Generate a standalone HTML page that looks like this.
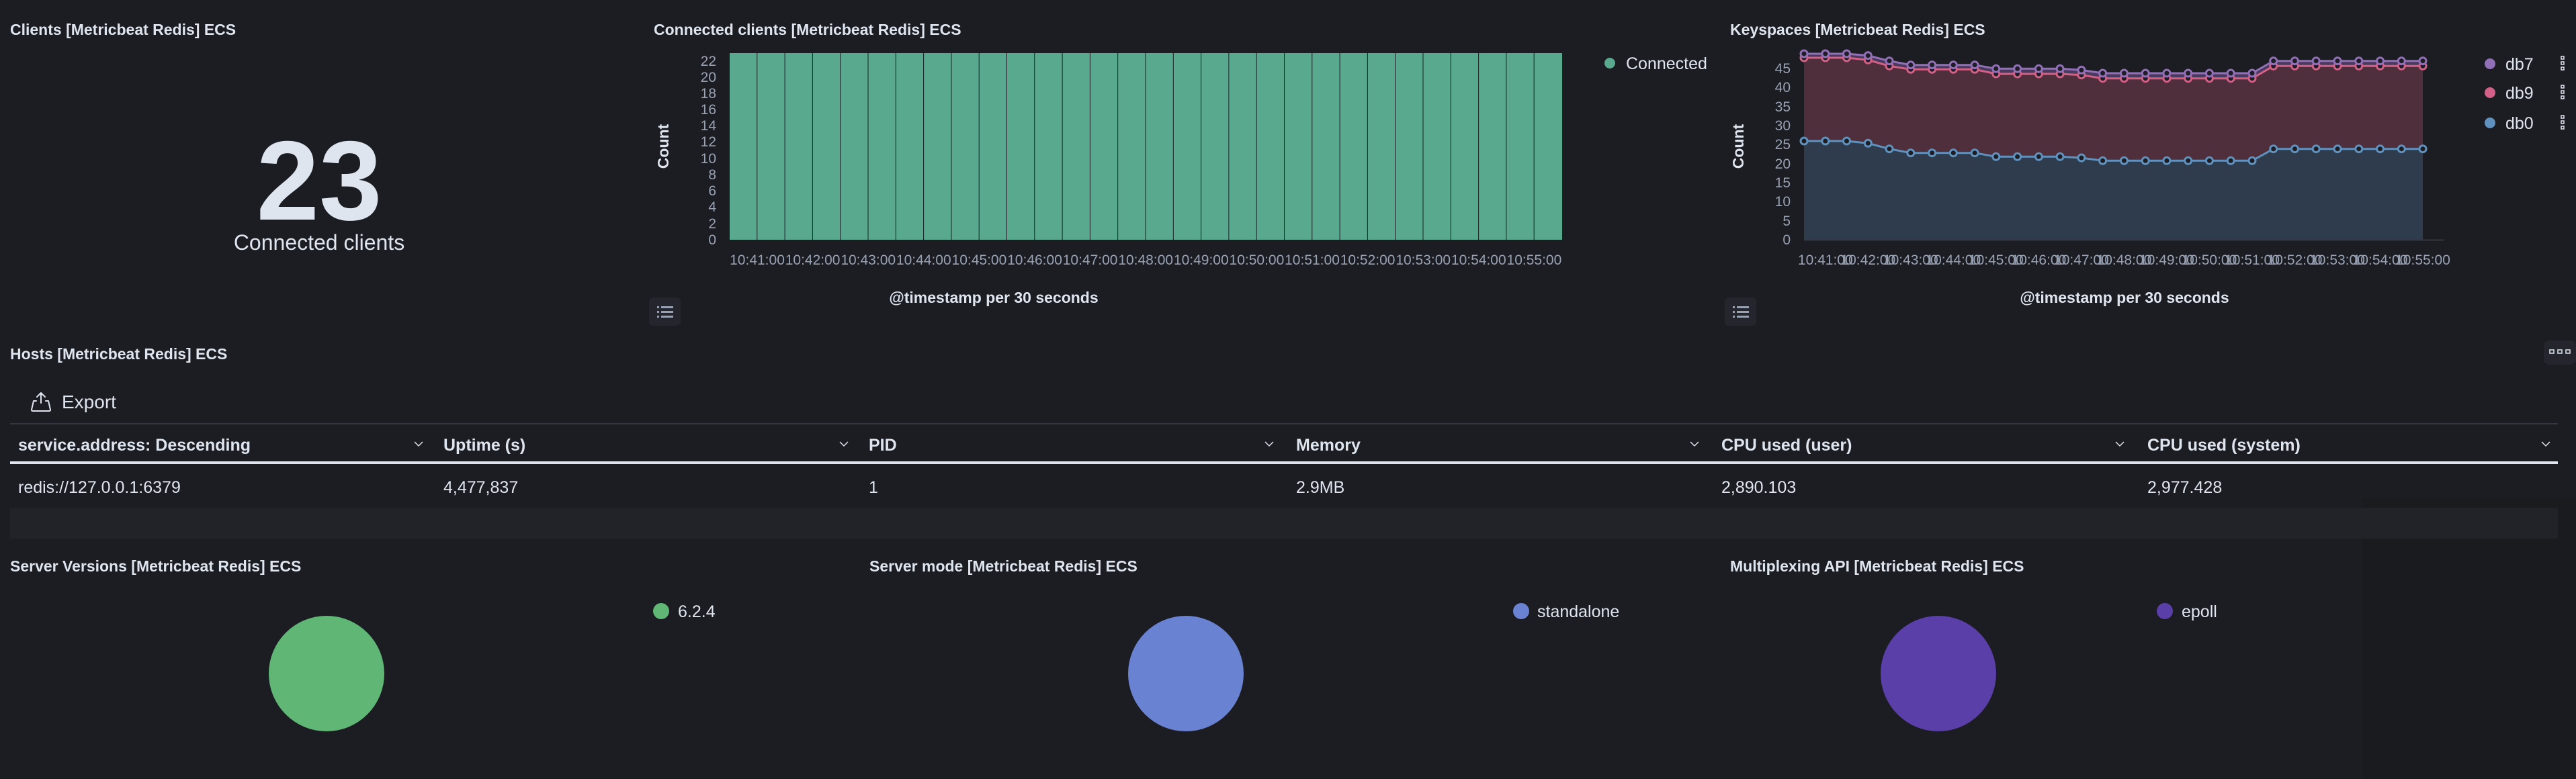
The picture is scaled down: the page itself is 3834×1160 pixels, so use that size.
<!DOCTYPE html>
<html><head><meta charset="utf-8"><style>
html,body{margin:0;padding:0;background:#1c1d22;width:3834px;height:1160px;overflow:hidden}
svg{display:block}
text{font-family:"Liberation Sans",sans-serif}
.t{font-size:23px;font-weight:bold;fill:#dfe5ef}
.ax{font-size:21px;fill:#98a2b3}
.lg{font-size:25px;fill:#dfe5ef}
.th{font-size:25px;font-weight:bold;fill:#dfe5ef}
.td{font-size:25px;fill:#dfe5ef}
</style></head><body>
<svg width="3834" height="1160" viewBox="0 0 3834 1160" xmlns="http://www.w3.org/2000/svg">
<defs>
<marker id="m7" markerUnits="userSpaceOnUse" markerWidth="16" markerHeight="16" refX="8" refY="8"><circle cx="8" cy="8" r="5" fill="#1d1e24" stroke="#9170b8" stroke-width="3"/></marker>
<marker id="m9" markerUnits="userSpaceOnUse" markerWidth="16" markerHeight="16" refX="8" refY="8"><circle cx="8" cy="8" r="5" fill="#1d1e24" stroke="#d36086" stroke-width="3"/></marker>
<marker id="m0" markerUnits="userSpaceOnUse" markerWidth="16" markerHeight="16" refX="8" refY="8"><circle cx="8" cy="8" r="5" fill="#1d1e24" stroke="#6092c0" stroke-width="3"/></marker>
</defs>
<rect x="0" y="0" width="3834" height="1160" fill="#1c1d22"/>
<rect x="3516" y="742" width="318" height="418" fill="#1a1b1f"/>

<!-- Panel 1 -->
<text class="t" x="15" y="52">Clients [Metricbeat Redis] ECS</text>
<text x="475" y="327" text-anchor="middle" style="font-size:168px;font-weight:bold;fill:#dfe5ef">23</text>
<text x="475" y="372" text-anchor="middle" style="font-size:32px;fill:#dfe5ef">Connected clients</text>

<!-- Panel 2 -->
<text class="t" x="973" y="52">Connected clients [Metricbeat Redis] ECS</text>
<g fill="#59a98e">
<rect x="1086" y="79" width="40.3" height="278"/><rect x="1127.3" y="79" width="40.3" height="278"/><rect x="1168.6" y="79" width="40.3" height="278"/><rect x="1209.9" y="79" width="40.3" height="278"/><rect x="1251.2" y="79" width="40.3" height="278"/><rect x="1292.5" y="79" width="40.3" height="278"/><rect x="1333.8" y="79" width="40.3" height="278"/><rect x="1375.1" y="79" width="40.3" height="278"/><rect x="1416.4" y="79" width="40.3" height="278"/><rect x="1457.7" y="79" width="40.3" height="278"/>
<rect x="1499" y="79" width="40.3" height="278"/><rect x="1540.3" y="79" width="40.3" height="278"/><rect x="1581.6" y="79" width="40.3" height="278"/><rect x="1622.9" y="79" width="40.3" height="278"/><rect x="1664.2" y="79" width="40.3" height="278"/><rect x="1705.5" y="79" width="40.3" height="278"/><rect x="1746.8" y="79" width="40.3" height="278"/><rect x="1788.1" y="79" width="40.3" height="278"/><rect x="1829.4" y="79" width="40.3" height="278"/><rect x="1870.7" y="79" width="40.3" height="278"/>
<rect x="1912" y="79" width="40.3" height="278"/><rect x="1953.3" y="79" width="40.3" height="278"/><rect x="1994.6" y="79" width="40.3" height="278"/><rect x="2035.9" y="79" width="40.3" height="278"/><rect x="2077.2" y="79" width="40.3" height="278"/><rect x="2118.5" y="79" width="40.3" height="278"/><rect x="2159.8" y="79" width="40.3" height="278"/><rect x="2201.1" y="79" width="40.3" height="278"/><rect x="2242.4" y="79" width="40.3" height="278"/><rect x="2283.7" y="79" width="41.3" height="278"/>
</g>
<g class="ax" text-anchor="end">
<text x="1066" y="364">0</text><text x="1066" y="340">2</text><text x="1066" y="315">4</text><text x="1066" y="291">6</text><text x="1066" y="267">8</text><text x="1066" y="243">10</text><text x="1066" y="218">12</text><text x="1066" y="194">14</text><text x="1066" y="170">16</text><text x="1066" y="146">18</text><text x="1066" y="122">20</text><text x="1066" y="98">22</text>
</g>
<g class="ax" text-anchor="middle">
<text x="1127" y="394">10:41:00</text><text x="1209.6" y="394">10:42:00</text><text x="1292.2" y="394">10:43:00</text><text x="1374.8" y="394">10:44:00</text><text x="1457.4" y="394">10:45:00</text><text x="1540" y="394">10:46:00</text><text x="1622.6" y="394">10:47:00</text><text x="1705.2" y="394">10:48:00</text><text x="1787.8" y="394">10:49:00</text><text x="1870.4" y="394">10:50:00</text><text x="1953" y="394">10:51:00</text><text x="2035.6" y="394">10:52:00</text><text x="2118.2" y="394">10:53:00</text><text x="2200.8" y="394">10:54:00</text><text x="2283.4" y="394">10:55:00</text>
</g>
<text class="t" transform="translate(995,218) rotate(-90)" text-anchor="middle">Count</text>
<text class="t" x="1479" y="451" text-anchor="middle">@timestamp per 30 seconds</text>
<circle cx="2396" cy="94" r="8" fill="#59a98e"/>
<text class="lg" x="2420" y="103">Connected</text>
<rect x="966" y="443" width="47" height="42" rx="6" fill="#25262d"/>
<g fill="#98a2b3"><rect x="978" y="456" width="3" height="3"/><rect x="984" y="456" width="18" height="3"/><rect x="978" y="463" width="3" height="3"/><rect x="984" y="463" width="18" height="3"/><rect x="978" y="470" width="3" height="3"/><rect x="984" y="470" width="18" height="3"/></g>

<!-- Panel 3 -->
<text class="t" x="2575" y="52">Keyspaces [Metricbeat Redis] ECS</text>
<polygon fill="#4a3a5e" points="2685,80 2716.8,80 2748.5,80 2780.3,82.7 2812,90.7 2843.8,96.7 2875.6,96.7 2907.3,96.7 2939.1,96.7 2970.8,102.3 3002.6,102.3 3034.4,102.3 3066.1,102.3 3097.9,104.3 3129.6,109 3161.4,109 3193.2,109 3224.9,109 3256.7,109 3288.4,109 3320.2,109 3352,109 3383.7,90.7 3415.5,90.7 3447.2,90.7 3479,90.7 3510.8,90.7 3542.5,90.7 3574.3,90.7 3606,90.7 3606,357 2685,357"/>
<polygon fill="#4e2f3b" points="2685,86 2716.8,86 2748.5,86 2780.3,89.3 2812,98.3 2843.8,103.3 2875.6,103.3 2907.3,103.3 2939.1,103.3 2970.8,110 3002.6,110 3034.4,110 3066.1,110 3097.9,111.7 3129.6,116.7 3161.4,116.7 3193.2,116.7 3224.9,116.7 3256.7,116.7 3288.4,116.7 3320.2,116.7 3352,116.7 3383.7,98.3 3415.5,98.3 3447.2,98.3 3479,98.3 3510.8,98.3 3542.5,98.3 3574.3,98.3 3606,98.3 3606,357 2685,357"/>
<polygon fill="#2f3c4e" points="2685,210 2716.8,210 2748.5,210 2780.3,213.3 2812,221.7 2843.8,227.7 2875.6,227.7 2907.3,227.7 2939.1,227.7 2970.8,233.3 3002.6,233.3 3034.4,233.3 3066.1,233.3 3097.9,235 3129.6,239.3 3161.4,239.3 3193.2,239.3 3224.9,239.3 3256.7,239.3 3288.4,239.3 3320.2,239.3 3352,239.3 3383.7,221.7 3415.5,221.7 3447.2,221.7 3479,221.7 3510.8,221.7 3542.5,221.7 3574.3,221.7 3606,221.7 3606,357 2685,357"/>
<line x1="2685" y1="357.5" x2="3638" y2="357.5" stroke="#343741" stroke-width="2"/>
<polyline fill="none" stroke="#d36086" stroke-width="3" marker-start="url(#m9)" marker-mid="url(#m9)" marker-end="url(#m9)" points="2685,86 2716.8,86 2748.5,86 2780.3,89.3 2812,98.3 2843.8,103.3 2875.6,103.3 2907.3,103.3 2939.1,103.3 2970.8,110 3002.6,110 3034.4,110 3066.1,110 3097.9,111.7 3129.6,116.7 3161.4,116.7 3193.2,116.7 3224.9,116.7 3256.7,116.7 3288.4,116.7 3320.2,116.7 3352,116.7 3383.7,98.3 3415.5,98.3 3447.2,98.3 3479,98.3 3510.8,98.3 3542.5,98.3 3574.3,98.3 3606,98.3"/>
<polyline fill="none" stroke="#9170b8" stroke-width="3" marker-start="url(#m7)" marker-mid="url(#m7)" marker-end="url(#m7)" points="2685,80 2716.8,80 2748.5,80 2780.3,82.7 2812,90.7 2843.8,96.7 2875.6,96.7 2907.3,96.7 2939.1,96.7 2970.8,102.3 3002.6,102.3 3034.4,102.3 3066.1,102.3 3097.9,104.3 3129.6,109 3161.4,109 3193.2,109 3224.9,109 3256.7,109 3288.4,109 3320.2,109 3352,109 3383.7,90.7 3415.5,90.7 3447.2,90.7 3479,90.7 3510.8,90.7 3542.5,90.7 3574.3,90.7 3606,90.7"/>
<polyline fill="none" stroke="#6092c0" stroke-width="3" marker-start="url(#m0)" marker-mid="url(#m0)" marker-end="url(#m0)" points="2685,210 2716.8,210 2748.5,210 2780.3,213.3 2812,221.7 2843.8,227.7 2875.6,227.7 2907.3,227.7 2939.1,227.7 2970.8,233.3 3002.6,233.3 3034.4,233.3 3066.1,233.3 3097.9,235 3129.6,239.3 3161.4,239.3 3193.2,239.3 3224.9,239.3 3256.7,239.3 3288.4,239.3 3320.2,239.3 3352,239.3 3383.7,221.7 3415.5,221.7 3447.2,221.7 3479,221.7 3510.8,221.7 3542.5,221.7 3574.3,221.7 3606,221.7"/>
<g class="ax" text-anchor="end">
<text x="2665" y="364">0</text><text x="2665" y="336">5</text><text x="2665" y="307">10</text><text x="2665" y="279">15</text><text x="2665" y="251">20</text><text x="2665" y="222">25</text><text x="2665" y="194">30</text><text x="2665" y="166">35</text><text x="2665" y="137">40</text><text x="2665" y="109">45</text>
</g>
<g class="ax" text-anchor="middle">
<text x="2716.8" y="394">10:41:00</text><text x="2780.3" y="394">10:42:00</text><text x="2843.8" y="394">10:43:00</text><text x="2907.3" y="394">10:44:00</text><text x="2970.8" y="394">10:45:00</text><text x="3034.4" y="394">10:46:00</text><text x="3097.9" y="394">10:47:00</text><text x="3161.4" y="394">10:48:00</text><text x="3224.9" y="394">10:49:00</text><text x="3288.4" y="394">10:50:00</text><text x="3352" y="394">10:51:00</text><text x="3415.5" y="394">10:52:00</text><text x="3479" y="394">10:53:00</text><text x="3542.5" y="394">10:54:00</text><text x="3606" y="394">10:55:00</text>
</g>
<text class="t" transform="translate(2595,218) rotate(-90)" text-anchor="middle">Count</text>
<text class="t" x="3162" y="451" text-anchor="middle">@timestamp per 30 seconds</text>
<rect x="2567" y="443" width="47" height="42" rx="6" fill="#25262d"/>
<g fill="#98a2b3"><rect x="2579" y="456" width="3" height="3"/><rect x="2585" y="456" width="18" height="3"/><rect x="2579" y="463" width="3" height="3"/><rect x="2585" y="463" width="18" height="3"/><rect x="2579" y="470" width="3" height="3"/><rect x="2585" y="470" width="18" height="3"/></g>
<circle cx="3706" cy="95" r="8" fill="#9170b8"/><text class="lg" x="3729" y="104">db7</text>
<circle cx="3706" cy="138" r="8" fill="#d36086"/><text class="lg" x="3729" y="147">db9</text>
<circle cx="3706" cy="183" r="8" fill="#6092c0"/><text class="lg" x="3729" y="192">db0</text>
<g fill="none" stroke="#dfe5ef" stroke-width="1.5">
<rect x="3812" y="84" width="4" height="4"/><rect x="3812" y="92" width="4" height="4"/><rect x="3812" y="100" width="4" height="4"/>
<rect x="3812" y="127" width="4" height="4"/><rect x="3812" y="135" width="4" height="4"/><rect x="3812" y="143" width="4" height="4"/>
<rect x="3812" y="172" width="4" height="4"/><rect x="3812" y="180" width="4" height="4"/><rect x="3812" y="188" width="4" height="4"/>
</g>

<!-- Hosts table -->
<text class="t" x="15" y="535">Hosts [Metricbeat Redis] ECS</text>
<rect x="3786" y="507" width="48" height="36" rx="8" fill="#25262d"/>
<g fill="none" stroke="#dfe5ef" stroke-width="1.5"><rect x="3795" y="521" width="6" height="5"/><rect x="3807" y="521" width="6" height="5"/><rect x="3819" y="521" width="6" height="5"/></g>
<g fill="none" stroke="#dfe5ef" stroke-width="2" stroke-linecap="round" stroke-linejoin="round">
<path d="M61 600 V585 M55 591 L61 585 L67 591"/>
<path d="M54 597 H50 L47 610 Q47 612 49 612 H73 Q75 612 75 610 L72 597 H68"/>
</g>
<text x="92" y="608" style="font-size:28px;fill:#dfe5ef">Export</text>
<rect x="15" y="630" width="3792" height="2" fill="#343741"/>
<rect x="15" y="687" width="3792" height="4" fill="#dfe5ef"/>
<rect x="15" y="756" width="3792" height="46" fill="#222329"/>
<g class="th">
<text x="27" y="671">service.address: Descending</text>
<text x="660" y="671">Uptime (s)</text>
<text x="1293" y="671">PID</text>
<text x="1929" y="671">Memory</text>
<text x="2562" y="671">CPU used (user)</text>
<text x="3196" y="671">CPU used (system)</text>
</g>
<g fill="none" stroke="#dfe5ef" stroke-width="1.5">
<path d="M617 658 L623 664 L629 658"/><path d="M1250 658 L1256 664 L1262 658"/><path d="M1883 658 L1889 664 L1895 658"/><path d="M2516 658 L2522 664 L2528 658"/><path d="M3149 658 L3155 664 L3161 658"/><path d="M3783 658 L3789 664 L3795 658"/>
</g>
<g class="td">
<text x="27" y="734">redis://127.0.0.1:6379</text>
<text x="660" y="734">4,477,837</text>
<text x="1293" y="734">1</text>
<text x="1929" y="734">2.9MB</text>
<text x="2562" y="734">2,890.103</text>
<text x="3196" y="734">2,977.428</text>
</g>

<!-- Bottom pies -->
<text class="t" x="15" y="851">Server Versions [Metricbeat Redis] ECS</text>
<circle cx="486" cy="1003" r="86" fill="#60b775"/>
<circle cx="984" cy="910" r="12" fill="#60b775"/><text class="lg" x="1009" y="919">6.2.4</text>

<text class="t" x="1294" y="851">Server mode [Metricbeat Redis] ECS</text>
<circle cx="1765" cy="1003" r="86" fill="#6a82d2"/>
<circle cx="2264" cy="910" r="12" fill="#6a82d2"/><text class="lg" x="2288" y="919">standalone</text>

<text class="t" x="2575" y="851">Multiplexing API [Metricbeat Redis] ECS</text>
<circle cx="2885" cy="1003" r="86" fill="#5a3fa9"/>
<circle cx="3222" cy="910" r="12" fill="#5a3fa9"/><text class="lg" x="3247" y="919">epoll</text>
</svg>
</body></html>
